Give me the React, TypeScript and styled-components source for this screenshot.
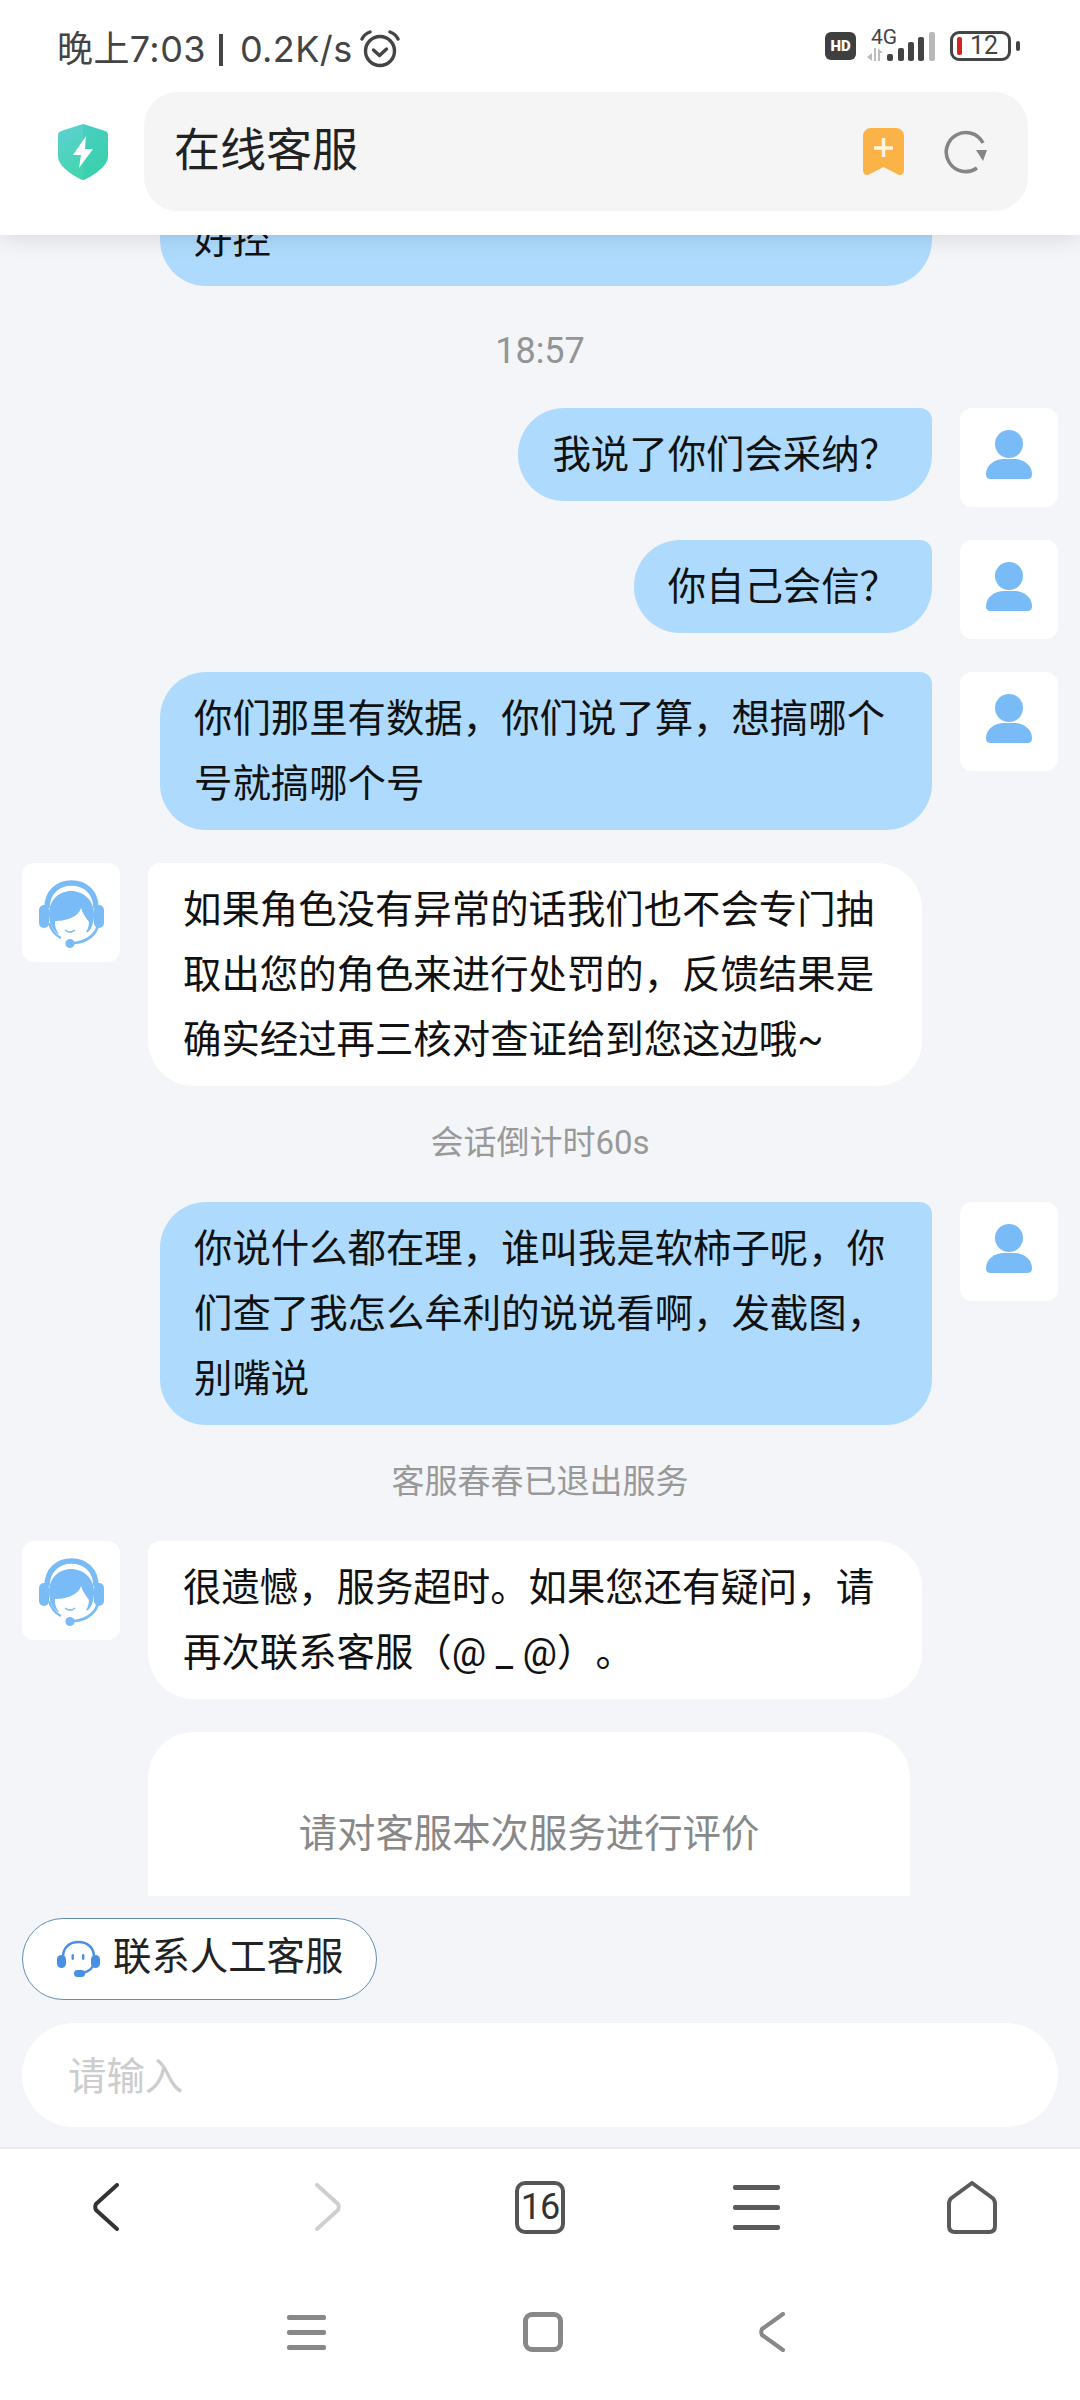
import styled, { createGlobalStyle } from "styled-components";

const GlobalStyle = createGlobalStyle`
    html, body {
        margin: 0;
        padding: 0;
        background: #f3f5f8;
    }
    * {
        box-sizing: border-box;
    }
`;

const FONT = `Roboto, "Noto Sans CJK SC", sans-serif`;

const ShieldIcon = () => (
    <svg width="50" height="56" viewBox="0 0 50 56">
        <defs>
            <linearGradient id="shield" x1="0" y1="0" x2="0.6" y2="1">
                <stop offset="0" stopColor="#5fd0d4" />
                <stop offset="1" stopColor="#3fd6a8" />
            </linearGradient>
        </defs>
        <path d="M25 0 L47 7 C49 8 50 9 50 11 V32 C50 42 36 51 27 55.5 C26 56 24 56 23 55.5 C14 51 0 42 0 32 V11 C0 9 1 8 3 7 Z" fill="url(#shield)" />
        <path d="M25 0 L47 7 C49 8 50 9 50 11 V32 C50 42 36 51 27 55.5 L25 56 Z" fill="#2fc9b4" opacity="0.35" />
        <path d="M28 12 L15 31 H23 L21 44 L35 25 H27 Z" fill="#ffffff" />
    </svg>
);

const AlarmIcon = () => (
    <svg width="40" height="38" viewBox="0 0 40 38" fill="none" stroke="#444" strokeWidth="3.4" strokeLinecap="round" strokeLinejoin="round">
        <circle cx="20" cy="21" r="14.5" />
        <path d="M13.5 20 L19.5 25.5 L26.5 19" />
        <path d="M2 9 C4 5 7 3 10 2" />
        <path d="M38 9 C36 5 33 3 30 2" />
    </svg>
);

const NetworkIcon = () => (
    <svg width="68" height="32" viewBox="0 0 68 32">
        <path d="M5 32 V24 L0 28 Z M7 19 H9 V32 H7 Z M11 19 V32 H13 V24 H16 Z" fill="#bdbdbd" transform="translate(0 -1)" />
        <rect x="20" y="24" width="6" height="7" rx="2" fill="#444" />
        <rect x="31" y="18" width="6" height="13" rx="2" fill="#444" />
        <rect x="41" y="12" width="6" height="19" rx="2" fill="#444" />
        <rect x="51" y="7" width="6" height="24" rx="2" fill="#444" />
        <rect x="62" y="2" width="6" height="29" rx="2" fill="#b8b8b8" />
    </svg>
);

const BookmarkIcon = () => (
    <svg width="41" height="48" viewBox="0 0 41 48">
        <path d="M8 0 H33 A8 8 0 0 1 41 8 V42 C41 47 37 48 34 46 L20.5 39 L7 46 C4 48 0 47 0 42 V8 A8 8 0 0 1 8 0 Z" fill="#fbb246" />
        <path d="M20.5 10 V29 M11 20 H30" stroke="#fff4e0" strokeWidth="3.6" />
    </svg>
);

const ReloadIcon = () => (
    <svg width="44" height="44" viewBox="0 0 44 44" fill="none">
        <path d="M39 13 A19.5 19.5 0 1 0 33 38" stroke="#858585" strokeWidth="3.6" />
        <path d="M32 20 H43 L39 31 Z" fill="#858585" />
    </svg>
);

const UserIcon = () => (
    <svg width="48" height="56" viewBox="0 0 48 56">
        <circle cx="24" cy="14" r="14" fill="#79bbf6" />
        <path d="M1 44 C1 35 10 29 19 29 H29 C38 29 47 35 47 44 C47 48 45 49 42 49 H6 C3 49 1 48 1 44 Z" fill="#79bbf6" />
    </svg>
);

const AgentIcon = () => (
    <svg width="98" height="98" viewBox="0 0 98 98" fill="none">
        <rect x="17" y="41" width="10" height="23" rx="5" fill="#79bbf6" />
        <rect x="72" y="41" width="10" height="23" rx="5" fill="#79bbf6" />
        <path d="M25 44 C25 28 36 19 49.5 19 C63 19 74 28 74 44" stroke="#79bbf6" strokeWidth="5.5" />
        <path d="M30 38 C33 29 41 24 49.5 24 C58 24 66 29 69 38" stroke="#ffffff" strokeWidth="1.8" />
        <path d="M27 50 C27 36 37 27 49 27 C61 27 72 36 72 50 C72 58 70 64 66 68 L36 70 C30 66 27 58 27 50 Z" fill="#79bbf6" />
        <path d="M33 57 C42 57 56 54 59 44 C61 50 64 54 67 58 C67 69 58 76 49 76 C41 76 32 68 33 57 Z" fill="#ffffff" />
        <path d="M27 59 C29 66 33 71 39 74" stroke="#79bbf6" strokeWidth="2.4" />
        <path d="M43 66 C46 68.5 50 68.5 53 66" stroke="#79bbf6" strokeWidth="1.6" />
        <path d="M76 60 C75 70 65 78 52 79" stroke="#79bbf6" strokeWidth="2.6" />
        <circle cx="48" cy="79.5" r="4.6" fill="#79bbf6" />
    </svg>
);

const ContactIcon = () => (
    <svg width="43" height="38" viewBox="0 0 43 38" fill="none">
        <path d="M6 17 C6 7 13 2 21.5 2 C30 2 37 7 37 17" stroke="#4a90e2" strokeWidth="2.4" />
        <path d="M37 22 C36 29 32 31 26 33" stroke="#4a90e2" strokeWidth="2.4" />
        <rect x="0" y="15" width="9" height="13" rx="4.5" fill="#4a90e2" />
        <rect x="34" y="15" width="9" height="13" rx="4.5" fill="#4a90e2" />
        <rect x="14.5" y="14" width="2.4" height="6" rx="1.2" fill="#4a90e2" />
        <rect x="25" y="14" width="2.4" height="6" rx="1.2" fill="#4a90e2" />
        <rect x="17" y="30" width="11" height="7" rx="3.5" fill="#4a90e2" />
    </svg>
);

const Chevron = ({ color, height, flip }: { color: string; height: number; flip?: boolean }) => {
    const mid = height / 2;
    return (
        <svg width="26" height={height} viewBox={`0 0 26 ${height}`} fill="none">
            <path
                d={`M24 2 L3 ${mid - 3} Q1.5 ${mid} 3 ${mid + 3} L24 ${height - 2}`}
                transform={flip ? "matrix(-1 0 0 1 26 0)" : undefined}
                stroke={color}
                strokeWidth="4"
                strokeLinecap="round"
                strokeLinejoin="round"
            />
        </svg>
    );
};

const HomeIcon = () => (
    <svg width="50" height="53" viewBox="0 0 50 53" fill="none">
        <path d="M25 2 L45.5 17 Q48 19 48 23 V45 Q48 51 42 51 H8 Q2 51 2 45 V23 Q2 19 4.5 17 Z" stroke="#5a5a5a" strokeWidth="4" strokeLinejoin="round" />
    </svg>
);

const Page = styled.div`
    width: 1080px;
    height: 2400px;
    display: flex;
    flex-direction: column;
    overflow: hidden;
    background: #f3f5f8;
    font-family: ${FONT};
`;

const Header = styled.header`
    position: relative;
    z-index: 2;
    height: 235px;
    flex-shrink: 0;
    background: #ffffff;
    box-shadow: 0 2px 22px rgba(0, 0, 0, 0.13);
`;

const StatusBar = styled.div`
    height: 92px;
    padding: 0 62px 0 57px;
    display: flex;
    align-items: center;
    justify-content: space-between;
`;

const StatusLeft = styled.div`
    display: flex;
    align-items: center;
    color: #444444;
    font-family: Inter, "Noto Sans CJK SC", sans-serif;
    font-size: 36px;
    line-height: 48px;
    letter-spacing: 0.4px;
    margin-top: 5px;
`;

const StatusDivider = styled.span`
    width: 4px;
    height: 32px;
    margin: 3px 17px 0 13px;
    background: #444444;
`;

const StatusAlarm = styled.span`
    display: flex;
    margin-left: 7px;
`;

const StatusRight = styled.div`
    display: flex;
    align-items: center;
`;

const HdBadge = styled.span`
    width: 31px;
    height: 28px;
    border-radius: 6px;
    background: #3f3f3f;
    color: #ffffff;
    font-size: 15px;
    font-weight: 900;
    display: flex;
    align-items: center;
    justify-content: center;
    margin-right: 11px;
`;

const NetworkBlock = styled.div`
    position: relative;
    width: 68px;
    height: 32px;
    margin-right: 15px;
`;

const NetworkLabel = styled.span`
    position: absolute;
    left: 4px;
    top: -4px;
    font-size: 21px;
    line-height: 22px;
    color: #444444;
`;

const Battery = styled.div`
    position: relative;
    width: 61px;
    height: 30px;
    border: 3px solid #444444;
    border-radius: 9px;
    display: flex;
    align-items: center;
    padding-left: 4px;
    margin-right: 7px;
`;

const BatteryLevel = styled.span`
    width: 5px;
    height: 18px;
    border-radius: 2px;
    background: #d6231f;
    margin-right: 8px;
`;

const BatteryText = styled.span`
    font-size: 25px;
    line-height: 24px;
    color: #444444;
`;

const BatteryNub = styled.span`
    position: absolute;
    right: -12px;
    top: 7px;
    width: 4px;
    height: 10px;
    border-radius: 2px;
    background: #444444;
`;

const Toolbar = styled.div`
    height: 143px;
    padding: 0 52px 24px 58px;
    display: flex;
    align-items: center;
    gap: 36px;
`;

const AddressBox = styled.div`
    flex: 1;
    height: 119px;
    border-radius: 34px;
    background: #f5f5f5;
    padding: 0 40px 0 30px;
    display: flex;
    align-items: center;
`;

const Title = styled.div`
    flex: 1;
    font-size: 46px;
    line-height: 60px;
    padding-bottom: 4px;
    color: #222222;
`;

const AddressActions = styled.div`
    display: flex;
    align-items: center;
    gap: 40px;
`;

const Chat = styled.main`
    flex: 1;
    min-height: 0;
    overflow: hidden;
    display: flex;
    flex-direction: column;
`;

const Row = styled.div<{ $side: "user" | "agent"; $offset?: number }>`
    display: flex;
    flex-direction: ${(p) => (p.$side === "user" ? "row-reverse" : "row")};
    align-items: flex-start;
    gap: 28px;
    padding: 0 22px;
    margin-top: ${(p) => p.$offset ?? 0}px;
    margin-bottom: 33px;
    flex-shrink: 0;
`;

const Avatar = styled.div`
    width: 98px;
    height: 99px;
    flex-shrink: 0;
    border-radius: 12px;
    background: #ffffff;
    display: flex;
    align-items: center;
    justify-content: center;
`;

const Bubble = styled.div<{ $side: "user" | "agent"; $wide?: boolean }>`
    width: ${(p) => (p.$wide ? "772px" : "auto")};
    max-width: ${(p) => (p.$side === "user" ? "772px" : "774px")};
    padding: 14px ${(p) => (p.$side === "user" ? "34px" : "35px")};
    font-size: 38.4px;
    line-height: 65px;
    color: #111111;
    white-space: pre-wrap;
    text-spacing-trim: space-all;
    background: ${(p) => (p.$side === "user" ? "#aedbfd" : "#ffffff")};
    border-radius: ${(p) => (p.$side === "user" ? "46px 12px 46px 46px" : "12px 46px 46px 46px")};
`;

const Notice = styled.div`
    height: 48px;
    line-height: 48px;
    flex-shrink: 0;
    margin-bottom: 35px;
    text-align: center;
    font-size: 33px;
    color: #999999;
`;

const TimeNotice = styled(Notice)`
    margin-top: 8px;
    margin-bottom: 33px;
    font-size: 36px;
    color: #949494;
`;

const RatingCard = styled.section`
    width: 762px;
    height: 320px;
    flex-shrink: 0;
    margin-left: 148px;
    padding-top: 73px;
    border-radius: 46px 46px 0 0;
    background: #ffffff;
    text-align: center;
    font-size: 38.4px;
    line-height: 58px;
    color: #888888;
`;

const ContactRow = styled.div`
    flex-shrink: 0;
    padding: 22px 22px 23px;
    display: flex;
`;

const ContactButton = styled.div`
    height: 82px;
    width: 355px;
    border: 1px solid #5f8fb4;
    border-radius: 41px;
    background: #ffffff;
    padding-left: 34px;
    display: flex;
    align-items: center;
    gap: 13px;
    font-size: 38.4px;
    line-height: 50px;
    color: #222222;
`;

const ContactLabel = styled.span`
    padding-bottom: 5px;
`;

const InputBar = styled.div`
    flex-shrink: 0;
    height: 104px;
    margin: 0 22px 20px;
    border-radius: 52px;
    background: #ffffff;
    padding: 0 0 4px 46px;
    display: flex;
    align-items: center;
    font-size: 38.4px;
    color: #cccccc;
`;

const BottomBar = styled.footer`
    flex-shrink: 0;
    height: 253px;
    background: #ffffff;
    border-top: 2px solid #e8eaed;
`;

const NavRow = styled.div`
    height: 116px;
    display: grid;
    grid-template-columns: repeat(5, 216px);
    justify-items: center;
    align-items: center;
`;

const NavSlot = styled.div<{ $nudge?: number }>`
    display: flex;
    margin-left: ${(p) => p.$nudge ?? 0}px;
`;

const TabCount = styled.div`
    width: 50px;
    height: 53px;
    border: 4px solid #555555;
    border-radius: 10px;
    display: flex;
    align-items: center;
    justify-content: center;
    font-size: 36px;
    letter-spacing: -1px;
    color: #333333;
`;

const MenuLines = styled.div<{ $width: number; $gap: number; $color: string }>`
    width: ${(p) => p.$width}px;
    display: flex;
    flex-direction: column;
    gap: ${(p) => p.$gap}px;

    span {
        height: 5px;
        border-radius: 2px;
        background: ${(p) => p.$color};
    }
`;

const SystemRow = styled.div`
    height: 134px;
    padding: 0 295px 0 287px;
    display: flex;
    justify-content: space-between;
    align-items: center;
`;

const SystemSquare = styled.div`
    width: 40px;
    height: 40px;
    border: 5px solid #888888;
    border-radius: 9px;
`;

const Lines = ({ width, gap, color }: { width: number; gap: number; color: string }) => (
    <MenuLines $width={width} $gap={gap} $color={color}>
        <span />
        <span />
        <span />
    </MenuLines>
);

const userIcon = (
    <Avatar>
        <UserIcon />
    </Avatar>
);

const agentIcon = (
    <Avatar>
        <AgentIcon />
    </Avatar>
);

const App = () => {
    return (
        <Page>
            <GlobalStyle />
            <Header>
                <StatusBar>
                    <StatusLeft>
                        <span>晚上7:03</span>
                        <StatusDivider />
                        <span>0.2K/s</span>
                        <StatusAlarm>
                            <AlarmIcon />
                        </StatusAlarm>
                    </StatusLeft>
                    <StatusRight>
                        <HdBadge>HD</HdBadge>
                        <NetworkBlock>
                            <NetworkLabel>4G</NetworkLabel>
                            <NetworkIcon />
                        </NetworkBlock>
                        <Battery>
                            <BatteryLevel />
                            <BatteryText>12</BatteryText>
                            <BatteryNub />
                        </Battery>
                    </StatusRight>
                </StatusBar>
                <Toolbar>
                    <ShieldIcon />
                    <AddressBox>
                        <Title>在线客服</Title>
                        <AddressActions>
                            <BookmarkIcon />
                            <ReloadIcon />
                        </AddressActions>
                    </AddressBox>
                </Toolbar>
            </Header>
            <Chat>
                <Row $side="user" $offset={-107}>
                    {userIcon}
                    <Bubble $side="user" $wide>{"\n"}好控</Bubble>
                </Row>
                <TimeNotice>18:57</TimeNotice>
                <Row $side="user">
                    {userIcon}
                    <Bubble $side="user">{"我说了你们会采纳\uFF1F"}</Bubble>
                </Row>
                <Row $side="user">
                    {userIcon}
                    <Bubble $side="user">{"你自己会信\uFF1F"}</Bubble>
                </Row>
                <Row $side="user">
                    {userIcon}
                    <Bubble $side="user">{"你们那里有数据\uFF0C你们说了算\uFF0C想搞哪个号就搞哪个号"}</Bubble>
                </Row>
                <Row $side="agent">
                    {agentIcon}
                    <Bubble $side="agent">{"如果角色没有异常的话我们也不会专门抽取出您的角色来进行处罚的\uFF0C反馈结果是确实经过再三核对查证给到您这边哦~"}</Bubble>
                </Row>
                <Notice>会话倒计时60s</Notice>
                <Row $side="user">
                    {userIcon}
                    <Bubble $side="user">{"你说什么都在理\uFF0C谁叫我是软柿子呢\uFF0C你们查了我怎么牟利的说说看啊\uFF0C发截图\uFF0C别嘴说"}</Bubble>
                </Row>
                <Notice>客服春春已退出服务</Notice>
                <Row $side="agent">
                    {agentIcon}
                    <Bubble $side="agent">{"很遗憾\uFF0C服务超时。如果您还有疑问\uFF0C请再次联系客服\uFF08@ _ @\uFF09。"}</Bubble>
                </Row>
                <RatingCard>请对客服本次服务进行评价</RatingCard>
            </Chat>
            <ContactRow>
                <ContactButton>
                    <ContactIcon />
                    <ContactLabel>联系人工客服</ContactLabel>
                </ContactButton>
            </ContactRow>
            <InputBar>请输入</InputBar>
            <BottomBar>
                <NavRow>
                    <NavSlot $nudge={-5}>
                        <Chevron color="#333333" height={48} />
                    </NavSlot>
                    <NavSlot $nudge={8}>
                        <Chevron color="#cfcfcf" height={48} flip />
                    </NavSlot>
                    <TabCount>16</TabCount>
                    <Lines width={47} gap={15} color="#5a5a5a" />
                    <HomeIcon />
                </NavRow>
                <SystemRow>
                    <Lines width={39} gap={10} color="#888888" />
                    <SystemSquare />
                    <Chevron color="#888888" height={40} />
                </SystemRow>
            </BottomBar>
        </Page>
    );
};

export default App;
